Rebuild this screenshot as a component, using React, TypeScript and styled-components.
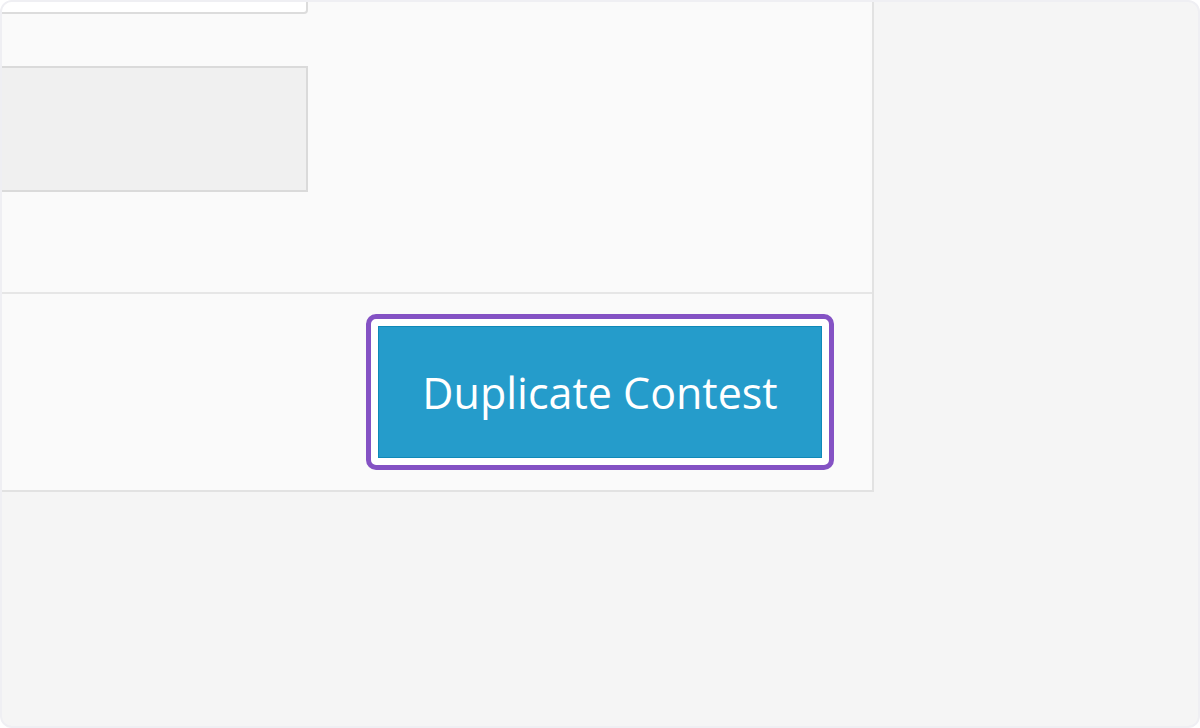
import React from "react";
import styled, { createGlobalStyle } from "styled-components";

const Global = createGlobalStyle`
  html, body { margin: 0; padding: 0; background: #ffffff; }
  body { font-family: "Open Sans", "Liberation Sans", sans-serif; }
  * { box-sizing: border-box; }
`;

const Frame = styled.div`
  width: 1200px;
  height: 728px;
  border: 2px solid #efeff3;
  border-radius: 12px;
  background: #f5f5f5;
  overflow: hidden;
  display: flex;
  align-items: flex-start;
`;

const Panel = styled.div`
  width: 872px;
  background: #fafafa;
  border-right: 2px solid #e2e2e2;
  border-bottom: 2px solid #e2e2e2;
  display: flex;
  flex-direction: column;
`;

const Body = styled.div`
  height: 292px;
  display: flex;
  flex-direction: column;
  gap: 52px;
  border-bottom: 2px solid #e6e6e6;
`;

const TextInput = styled.div`
  margin-top: -28px;
  margin-left: -12px;
  width: 318px;
  height: 40px;
  background: #ffffff;
  border: 2px solid #dcdcdc;
  border-radius: 4px;
`;

const TextArea = styled.div`
  margin-left: -12px;
  width: 318px;
  height: 126px;
  background: #f0f0f0;
  border: 2px solid #dadada;
`;

const Footer = styled.div`
  height: 196px;
  padding: 20px 38px 20px 0;
  display: flex;
  justify-content: flex-end;
  align-items: center;
`;

const FocusRing = styled.div`
  border: 5px solid #8452c4;
  border-radius: 10px;
  padding: 7px;
  background: #ffffff;
  display: flex;
`;

const Button = styled.button`
  width: 444px;
  height: 132px;
  background: #259ccb;
  border: 1px solid #1089b8;
  color: #ffffff;
  font-family: "Open Sans", "Liberation Sans", sans-serif;
  font-size: 43px;
  font-weight: 400;
  display: flex;
  align-items: center;
  justify-content: center;
  padding: 0;
  cursor: pointer;
`;

export default function App() {
  return (
    <>
      <Global />
      <Frame>
        <Panel>
          <Body>
            <TextInput />
            <TextArea />
          </Body>
          <Footer>
            <FocusRing>
              <Button>Duplicate Contest</Button>
            </FocusRing>
          </Footer>
        </Panel>
      </Frame>
    </>
  );
}
